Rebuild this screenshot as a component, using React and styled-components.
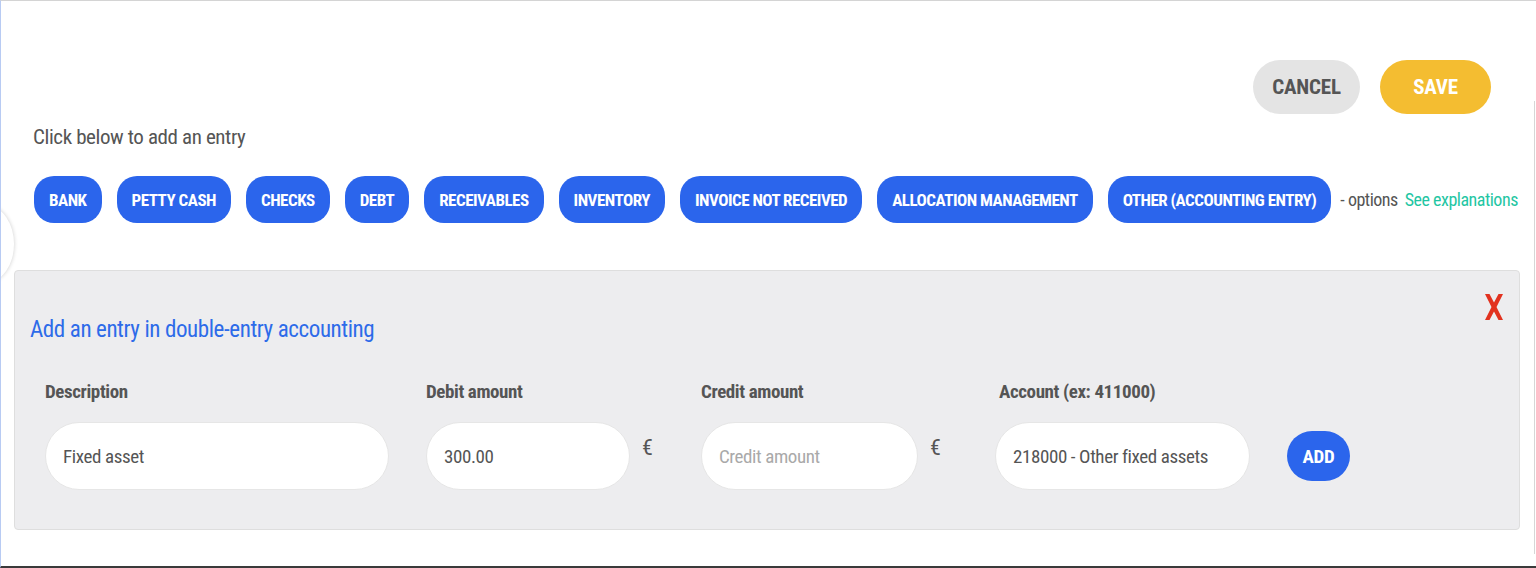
import React from "react";
import styled, { createGlobalStyle } from "styled-components";

const GlobalStyle = createGlobalStyle`
  html, body {
    margin: 0;
    padding: 0;
    background: #ffffff;
  }
  body {
    font-family: "Roboto Condensed", "Liberation Sans Narrow", "DejaVu Sans Condensed", Roboto, sans-serif;
  }
`;

const Page = styled.div`
  position: relative;
  box-sizing: border-box;
  height: 568px;
  overflow: hidden;
  border-top: 1px solid #d4d4d4;
  border-left: 1px solid #b8cbf3;
  border-bottom: 2px solid #3a3a3a;
  padding-top: 59px;
`;

const SideHandle = styled.div`
  position: absolute;
  left: -40px;
  top: 205px;
  width: 53px;
  height: 76px;
  border-radius: 50%;
  background: #fff;
  box-shadow: 0 0 4px rgba(0, 0, 0, 0.2);
`;

const ScrollEdge = styled.div`
  position: absolute;
  right: 1px;
  top: 100px;
  bottom: 12px;
  width: 1px;
  background: #d6d6d6;
`;

const TopBar = styled.div`
  display: flex;
  justify-content: flex-end;
  gap: 20px;
  padding-right: 45px;
`;

const PillButton = styled.button`
  width: ${({ $w }) => $w}px;
  height: 54px;
  padding: 0;
  border: none;
  border-radius: 27px;
  font-family: inherit;
  font-size: 21px;
  letter-spacing: -0.2px;
  font-weight: 700;
  background: ${({ $bg }) => $bg};
  color: ${({ $fg }) => $fg};
  cursor: pointer;
`;

const Intro = styled.div`
  margin: 9px 0 0 32px;
  font-size: 21px;
  letter-spacing: -0.4px;
  line-height: 28px;
  color: #555;
`;

const ChipRow = styled.div`
  display: flex;
  align-items: center;
  gap: 15px;
  margin: 25px 0 0 33px;
`;

const Chip = styled.button`
  height: 47px;
  padding: 0 15px;
  border: none;
  border-radius: 20px;
  background: #2b65ec;
  color: #fff;
  font-family: inherit;
  font-size: 17px;
  letter-spacing: -0.5px;
  font-weight: 700;
  white-space: nowrap;
  cursor: pointer;
`;

const Options = styled.span`
  font-size: 18px;
  letter-spacing: -0.5px;
  color: #555;
  margin-left: -6px;
  white-space: nowrap;
`;

const Explain = styled.a`
  font-size: 18px;
  letter-spacing: -0.5px;
  color: #1fc6a3;
  margin-left: -8px;
  white-space: nowrap;
  text-decoration: none;
`;

const Panel = styled.div`
  box-sizing: border-box;
  margin: 47px 16px 0 13px;
  height: 260px;
  background: #ededef;
  border: 1px solid #dedede;
  border-radius: 4px;
  padding: 21px 14px 0 15px;
`;

const PanelHead = styled.div`
  display: flex;
  justify-content: space-between;
  align-items: flex-start;
`;

const Title = styled.h2`
  margin: 20px 0 0 0;
  font-size: 23px;
  letter-spacing: -0.4px;
  line-height: 36px;
  font-weight: 400;
  color: #2d6be9;
`;

const Close = styled.button`
  border: none;
  background: none;
  padding: 0;
  width: 22px;
  height: 30px;
  cursor: pointer;
`;

const FieldRow = styled.div`
  display: flex;
  align-items: flex-end;
  gap: 37px;
  margin: 31px 0 0 15px;
`;

const Field = styled.div`
  display: flex;
  flex-direction: column;
  gap: 17px;
  margin-left: ${({ $shift }) => $shift || 0}px;
`;

const Label = styled.label`
  font-size: 19px;
  letter-spacing: -0.4px;
  line-height: 26px;
  font-weight: 700;
  color: #555;
  padding-left: ${({ $indent }) => $indent || 0}px;
`;

const InputLine = styled.div`
  display: flex;
  align-items: flex-start;
`;

const Input = styled.input`
  box-sizing: border-box;
  width: ${({ $w }) => $w}px;
  height: 68px;
  border: 1px solid #e6e6e6;
  border-radius: 34px;
  background: #fff;
  padding: 0 17px;
  font-family: inherit;
  font-size: 19px;
  letter-spacing: -0.4px;
  color: #555;
  outline: none;
  &::placeholder {
    color: #a9a9a9;
  }
`;

const Euro = styled.span`
  width: 22px;
  margin-left: 12px;
  padding-top: 13px;
  font-size: 22px;
  line-height: 26px;
  color: #555;
`;

const AddButton = styled.button`
  height: 50px;
  width: 63px;
  padding: 0;
  border: none;
  border-radius: 25px;
  background: #2b65ec;
  color: #fff;
  font-family: inherit;
  font-size: 19px;
  letter-spacing: -0.3px;
  font-weight: 700;
  margin-bottom: 9px;
  cursor: pointer;
`;

const chips = [
  "BANK",
  "PETTY CASH",
  "CHECKS",
  "DEBT",
  "RECEIVABLES",
  "INVENTORY",
  "INVOICE NOT RECEIVED",
  "ALLOCATION MANAGEMENT",
  "OTHER (ACCOUNTING ENTRY)",
];

const RedCross = () => (
  <svg width="22" height="30" viewBox="0 0 22 30">
    <path d="M2 2 L6.5 2 L11 10.5 L15.5 2 L20 2 L13.5 15 L20 28 L15.5 28 L11 19.5 L6.5 28 L2 28 L8.5 15 Z" fill="#e2321f" />
  </svg>
);

export default function App() {
  return (
    <>
      <GlobalStyle />
      <Page>
        <SideHandle />
        <ScrollEdge />
        <TopBar>
          <PillButton $w={107} $bg="#e4e4e4" $fg="#555">CANCEL</PillButton>
          <PillButton $w={111} $bg="#f4bd31" $fg="#fff">SAVE</PillButton>
        </TopBar>
        <Intro>Click below to add an entry</Intro>
        <ChipRow>
          {chips.map((c) => (
            <Chip key={c}>{c}</Chip>
          ))}
          <Options>- options</Options>
          <Explain href="#">See explanations</Explain>
        </ChipRow>
        <Panel>
          <PanelHead>
            <Title>Add an entry in double-entry accounting</Title>
            <Close aria-label="close">
              <RedCross />
            </Close>
          </PanelHead>
          <FieldRow>
            <Field>
              <Label>Description</Label>
              <Input $w={344} defaultValue="Fixed asset" />
            </Field>
            <Field>
              <Label>Debit amount</Label>
              <InputLine>
                <Input $w={204} defaultValue="300.00" />
                <Euro>€</Euro>
              </InputLine>
            </Field>
            <Field>
              <Label>Credit amount</Label>
              <InputLine>
                <Input $w={217} placeholder="Credit amount" />
                <Euro>€</Euro>
              </InputLine>
            </Field>
            <Field $shift={6}>
              <Label $indent={4}>Account (ex: 411000)</Label>
              <Input $w={255} defaultValue="218000 - Other fixed assets" />
            </Field>
            <AddButton>ADD</AddButton>
          </FieldRow>
        </Panel>
      </Page>
    </>
  );
}
